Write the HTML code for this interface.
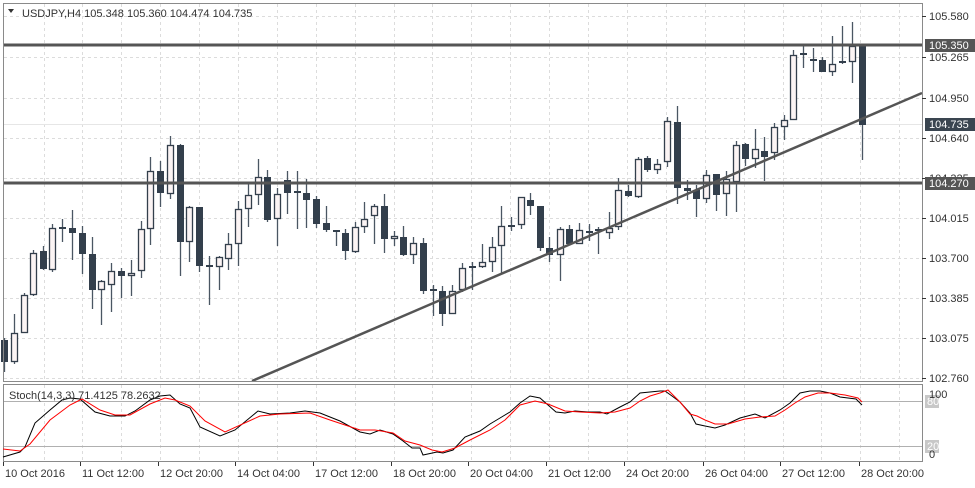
<!DOCTYPE html>
<html><head><meta charset="utf-8"><style>
html,body{margin:0;padding:0;background:#fff;width:975px;height:488px;overflow:hidden}
svg{display:block;font-family:"Liberation Sans",sans-serif}
</style></head><body>
<svg id="s" width="975" height="488" viewBox="0 0 975 488" xmlns="http://www.w3.org/2000/svg">
<g id="grid" stroke="#dcdcdc" stroke-dasharray="3,3" stroke-width="1"></g>
<line x1="4" y1="124.5" x2="922" y2="124.5" stroke="#e6e6e6"/>
<g id="candles"></g>
<line x1="4" y1="45" x2="922" y2="45" stroke="#555" stroke-width="3"/>
<line x1="4" y1="183" x2="922" y2="183" stroke="#555" stroke-width="3"/>
<line x1="252" y1="381" x2="922" y2="93" stroke="#555" stroke-width="2.5"/>
<rect x="3.5" y="3.5" width="919" height="378" fill="none" stroke="#8a8a8a"/>
<rect x="3.5" y="384.5" width="919" height="77" fill="none" stroke="#8a8a8a"/>
<polygon points="8,9 14,9 11,13" fill="#333"/>
<text x="22" y="17" font-size="11" fill="#333">USDJPY,H4  105.348 105.360 104.474 104.735</text>
<line x1="4" y1="401.5" x2="922" y2="401.5" stroke="#b0b0b0"/>
<line x1="4" y1="446.5" x2="922" y2="446.5" stroke="#b0b0b0"/>
<polyline fill="none" stroke="#000" stroke-width="1" points="3,457 20,452 25,447 35,423 50,410 62,400 70,398 80,399 95,412 110,416 125,416 135,411 150,400 160,396 170,395 180,404 190,408 200,427 220,436 235,430 258,411 270,414 290,413 305,411 320,413 340,421 360,432 370,434 380,430 393,434 403,441 412,448 420,448 423,455 437,452 443,453 453,450 465,437 480,431 490,424 500,418 510,412 520,403 530,396 540,398 548,405 556,412 565,413 575,411 588,412 600,412 607,414 620,407 630,402 640,393 660,391 665,391 672,396 680,402 690,413 696,424 705,426 715,428 725,425 740,418 755,414 765,418 780,410 790,403 800,393 810,391 820,391 830,393 840,397 856,399 862,405"/>
<polyline fill="none" stroke="#f00" stroke-width="1" points="3,449 20,451 30,444 50,420 70,405 82,399 100,410 115,415 130,415 150,404 165,398 175,400 190,406 205,421 225,432 260,416 280,414 310,413 330,420 360,430 375,430 393,433 405,441 420,445 432,450 442,452 455,448 470,440 490,430 505,420 520,405 535,401 548,404 565,411 580,412 600,413 615,412 630,408 640,401 650,396 660,393 668,390 680,402 690,414 697,416 705,420 715,424 728,424 745,419 760,417 775,416 785,410 795,403 805,397 818,393 830,393 845,395 858,398 862,402"/>
<text x="9" y="399" font-size="11" fill="#333">Stoch(14,3,3) 71.4125 78.2632</text>
<g id="axis" font-size="11" fill="#333"></g>
<rect x="925" y="395" width="14" height="13" fill="#c8c8c8"/>
<text x="927" y="405" font-size="11" fill="#fff">80</text>
<rect x="925" y="440" width="14" height="13" fill="#c8c8c8"/>
<text x="927" y="450" font-size="11" fill="#fff">20</text>
<text x="929" y="398" font-size="11" fill="#333">100</text>
<text x="929" y="458" font-size="11" fill="#333">0</text>
<g id="dates" font-size="11" fill="#333"></g>
</svg>
<script>
var NS="http://www.w3.org/2000/svg";
function el(p,t,a,txt){var e=document.createElementNS(NS,t);for(var k in a)e.setAttribute(k,a[k]);if(txt)e.textContent=txt;document.getElementById(p).appendChild(e);return e;}
// grid
for(var x=43.5;x<922;x+=38.9){el("grid","line",{x1:Math.round(x)+.5,y1:4,x2:Math.round(x)+.5,y2:381});el("grid","line",{x1:Math.round(x)+.5,y1:385,x2:Math.round(x)+.5,y2:461});}
var ys=[16,57,98,138,178,218,258,298,338,378];
ys.forEach(function(y){el("grid","line",{x1:4,y1:y+.5,x2:922,y2:y+.5});});
var C=[[4,340,362,338,372],[14,362,333,314,364],[24,333,295,293,333],[33,295,253,250,296],[43,251,269,246,270],[52,270,228,224,272],[62,228,228,219,242],[72,228,233,210,260],[82,233,254,226,274],[92,254,290,237,309],[101,290,281,280,325],[111,285,271,263,312],[121,271,276,268,298],[131,276,273,260,296],[141,271,229,221,278],[150,229,171,157,245],[160,171,193,161,207],[170,194,145,136,199],[180,145,242,144,276],[189,242,207,206,262],[199,207,266,207,272],[209,265,267,256,305],[219,267,257,256,290],[228,259,244,233,270],[238,244,209,201,266],[248,209,195,184,227],[258,195,177,159,205],[267,177,220,170,222],[277,219,194,188,246],[287,180,193,171,214],[297,192,193,171,229],[306,193,200,179,228],[316,199,224,196,228],[326,223,230,206,232],[336,230,232,230,246],[345,233,251,229,260],[355,252,227,222,253],[364,227,219,202,233],[374,216,206,204,244],[384,206,239,194,253],[394,239,236,231,246],[403,237,255,226,256],[413,255,243,237,264],[423,243,291,238,294],[433,290,291,285,316],[442,291,314,286,326],[452,314,291,285,305],[462,290,268,263,292],[472,267,268,262,290],[482,267,262,244,268],[492,262,247,237,272],[501,246,226,206,273],[511,226,226,217,231],[521,225,197,197,229],[530,200,206,193,215],[540,206,248,206,251],[549,248,255,237,262],[560,255,229,227,281],[569,229,244,225,244],[579,244,230,223,243],[589,231,233,224,241],[598,229,231,227,254],[609,233,228,212,239],[618,227,190,178,230],[628,191,196,185,197],[638,197,159,157,198],[647,158,170,156,172],[657,170,164,159,174],[667,162,121,117,167],[677,122,188,106,204],[687,188,191,180,200],[696,190,199,185,217],[706,199,175,170,203],[716,174,195,174,211],[726,194,179,171,216],[736,182,145,141,212],[745,144,159,143,166],[755,159,149,129,168],[764,151,157,137,181],[774,153,127,123,160],[784,127,120,115,140],[793,120,55,50,120],[803,54,54,45,68],[813,60,60,48,72],[822,60,72,57,72],[832,72,64,36,76],[842,62,62,26,64],[852,62,46,22,83],[862,46,125,46,160]];
C.forEach(function(c){var x=c[0],o=c[1],cl=c[2],h=c[3],l=c[4];var bull=o>cl;var top=Math.min(o,cl),bot=Math.max(o,cl);
el("candles","line",{x1:x+.5,y1:h,x2:x+.5,y2:l,stroke:"#4a5663","stroke-width":1.3});
if(bot-top<1.5){el("candles","rect",{x:x-3,y:top-1,width:7,height:2,fill:"#333f4c"});}
else if(bull){el("candles","rect",{x:x-2.5,y:top+.5,width:6,height:bot-top-1,fill:"#fbf4f4",stroke:"#333f4c","stroke-width":1.3});}
else{el("candles","rect",{x:x-3,y:top,width:7,height:bot-top,fill:"#333f4c"});}
});
var L=["105.580","105.265","104.950","104.640","104.325","104.015","103.700","103.385","103.075","102.760"];
ys.forEach(function(y,i){el("axis","line",{x1:922,y1:y+.5,x2:926,y2:y+.5,stroke:"#333"});el("axis","text",{x:929,y:y+4},L[i]);});
[[45,"105.350","#555"],[124,"104.735","#3a4550"],[183,"104.270","#555"]].forEach(function(a){el("axis","rect",{x:925,y:a[0]-6,width:50,height:13,fill:a[2]});el("axis","text",{x:929,y:a[0]+4,fill:"#fff"},a[1]);});
var D=[[5,"10 Oct 2016"],[82,"11 Oct 12:00"],[160,"12 Oct 20:00"],[237,"14 Oct 04:00"],[315,"17 Oct 12:00"],[393,"18 Oct 20:00"],[470,"20 Oct 04:00"],[548,"21 Oct 12:00"],[626,"24 Oct 20:00"],[705,"26 Oct 04:00"],[782,"27 Oct 12:00"],[861,"28 Oct 20:00"]];
D.forEach(function(d){el("dates","line",{x1:d[0]-1.5,y1:462,x2:d[0]-1.5,y2:466,stroke:"#333"});el("dates","text",{x:d[0],y:477},d[1]);});
</script>
</body></html>
